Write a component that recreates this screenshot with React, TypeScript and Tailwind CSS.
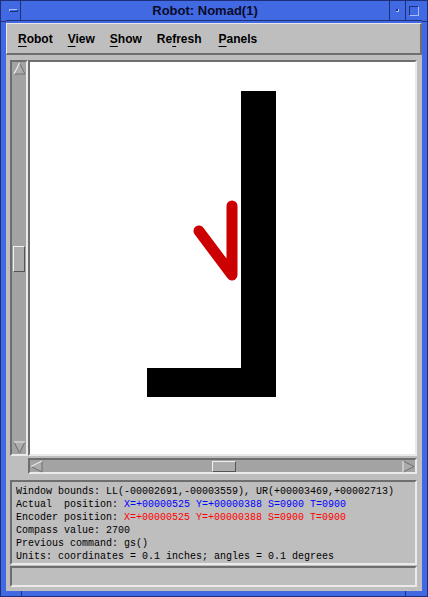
import React from 'react';

const sunken = 'border-2 border-t-[#6e6e6e] border-l-[#6e6e6e] border-b-[#eaeaea] border-r-[#eaeaea]';

function Arrow({ dir }: { dir: 'up' | 'down' | 'left' | 'right' }) {
  const pts: Record<string, string> = {
    up: '6.5,1 12,12 1,12',
    down: '1,1 12,1 6.5,12',
    left: '1,6.5 12,1 12,12',
    right: '1,1 12,6.5 1,12',
  };
  return (
    <svg width="13" height="13" viewBox="0 0 13 13" className="shrink-0">
      <polygon points={pts[dir]} fill="#acacac" stroke="#6e6e6e" strokeWidth="1" />
      {dir === 'up' && <line x1="1" y1="12" x2="6.5" y2="1" stroke="#f2f2f2" strokeWidth="1.2" />}
      {dir === 'down' && <line x1="1" y1="1" x2="12" y2="1" stroke="#f2f2f2" strokeWidth="1.2" />}
      {dir === 'left' && <line x1="1" y1="6.5" x2="12" y2="1" stroke="#f2f2f2" strokeWidth="1.2" />}
      {dir === 'right' && <line x1="1" y1="1" x2="1" y2="12" stroke="#f2f2f2" strokeWidth="1.2" />}
    </svg>
  );
}

const thumb = 'bg-[#acacac] border border-t-[#f0f0f0] border-l-[#f0f0f0] border-b-[#555] border-r-[#555]';

export default function App() {
  const menus: [string, string][] = [
    ['R', 'obot'],
    ['V', 'iew'],
    ['S', 'how'],
  ];
  return (
    <div className="relative w-[428px] h-[597px] bg-[#4169e1] border border-[#1d2f7a] flex flex-col px-[5px] pb-[5px] font-['Liberation_Sans',sans-serif] overflow-hidden">
      {/* frame corner marks */}
      <div className="absolute left-0 top-[20px] w-[5px] h-px bg-[#1d2f7a]" />
      <div className="absolute right-0 top-[20px] w-[5px] h-px bg-[#1d2f7a]" />
      <div className="absolute left-[20px] bottom-0 w-px h-[5px] bg-[#1d2f7a]" />
      <div className="absolute right-[21px] bottom-0 w-px h-[5px] bg-[#1d2f7a]" />

      {/* title bar */}
      <div className="h-[20px] mb-[2px] flex items-stretch border-b border-[#1d2f7a]">
        <div className="w-[15px] border-r border-[#1d2f7a] flex items-center justify-center">
          <div className="w-[9px] h-[3px] bg-[#4169e1] border-t border-l border-[#a8bdf5] border-b border-r border-b-[#1d2f7a] border-r-[#1d2f7a]" />
        </div>
        <div className="flex-1 flex items-center justify-center text-[13px] font-bold text-[#0b0b2a] leading-none">
          Robot: Nomad(1)
        </div>
        <div className="w-[16px] border-l border-[#1d2f7a] flex items-center justify-center">
          <div className="w-[3px] h-[3px] bg-[#1d2f7a] border-r border-b border-[#a8bdf5]" />
        </div>
        <div className="w-[17px] border-l border-[#1d2f7a] flex items-center justify-center">
          <div className="w-[10px] h-[10px] border border-t-[#1d2f7a] border-l-[#1d2f7a] border-b-[#a8bdf5] border-r-[#a8bdf5]" />
        </div>
      </div>

      {/* window body */}
      <div className="flex-1 bg-[#bebebe] flex flex-col">
        {/* menu bar */}
        <div className="h-[32px] flex items-center gap-[15px] pl-[11px] pt-[1px] border-t border-l border-[#e8e8e8] border-b-2 border-b-[#6e6e6e] border-r-2 border-r-[#6e6e6e] text-[12px] font-bold text-black">
          {menus.map(([f, r]) => (
            <span key={f}>
              <span className="underline underline-offset-[3px]">{f}</span>
              {r}
            </span>
          ))}
          <span>
            Re<span className="underline underline-offset-[3px]">f</span>resh
          </span>
          <span className="ml-[2px]">
            <span className="underline underline-offset-[3px]">P</span>anels
          </span>
        </div>

        <div className="flex flex-col pl-[4px] pr-[5px] pt-[5px]">
          {/* canvas row */}
          <div className="h-[396px] flex">
            <div className={`w-[18px] ${sunken} bg-[#a3a3a3] flex flex-col items-center`}>
              <Arrow dir="up" />
              <div className={`mt-[171px] w-[12px] h-[26px] ${thumb}`} />
              <div className="mt-auto">
                <Arrow dir="down" />
              </div>
            </div>
            <div className={`flex-1 ${sunken} bg-white`}>
              <svg width="385" height="391" viewBox="0 0 385 391" className="block">
                <rect x="211" y="29" width="35" height="306" fill="#000" />
                <rect x="117" y="306" width="129" height="29" fill="#000" />
                <polyline
                  points="169,169 202,213 202,144"
                  fill="none"
                  stroke="#cc0000"
                  strokeWidth="11"
                  strokeLinecap="round"
                  strokeLinejoin="round"
                />
              </svg>
            </div>
          </div>

          {/* horizontal scroll */}
          <div className="h-[16px] mt-[2px] flex">
            <div className="w-[18px]" />
            <div className={`flex-1 ${sunken} bg-[#a3a3a3] flex items-center`}>
              <Arrow dir="left" />
              <div className={`ml-[169px] w-[24px] h-[11px] ${thumb}`} />
              <div className="ml-auto">
                <Arrow dir="right" />
              </div>
            </div>
          </div>

          {/* status text */}
          <div className={`mt-[6px] h-[85px] ${sunken} pl-[4px] pt-[3px] font-['Liberation_Mono',monospace] text-[10px] leading-[13px] text-black whitespace-pre`}>
            <div>Window bounds: LL(-00002691,-00003559), UR(+00003469,+00002713)</div>
            <div>
              Actual  position: <span className="text-[#0000ff]">X=+00000525 Y=+00000388 S=0900 T=0900</span>
            </div>
            <div>
              Encoder position: <span className="text-[#ff0000]">X=+00000525 Y=+00000388 S=0900 T=0900</span>
            </div>
            <div>Compass value: 2700</div>
            <div>Previous command: gs()</div>
            <div>Units: coordinates = 0.1 inches; angles = 0.1 degrees</div>
          </div>

          <div className={`mt-[1px] h-[21px] ${sunken}`} />
        </div>
      </div>
    </div>
  );
}
